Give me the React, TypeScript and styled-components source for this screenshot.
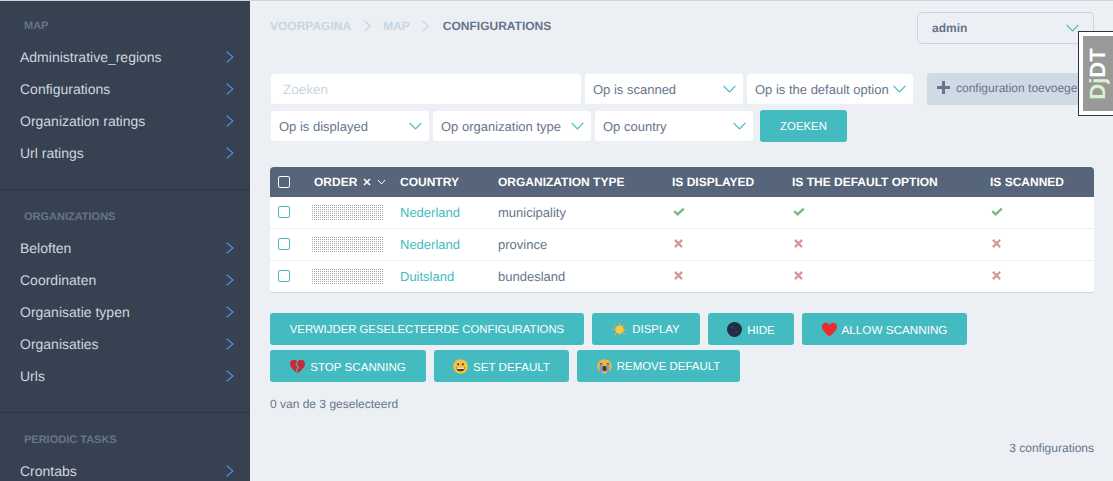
import React from "react";
import styled, { createGlobalStyle } from "styled-components";

const GlobalStyle = createGlobalStyle`
  html, body { margin: 0; padding: 0; background: #ecf0f5; }
  body { font-family: "Liberation Sans", Arial, sans-serif; text-rendering: geometricPrecision; }
  * { box-sizing: border-box; }
`;

const Page = styled.div`
  position: relative;
  display: flex;
  height: 481px;
  overflow: hidden;
  border-top: 1px solid #d2d2d2;
`;

const Sidebar = styled.nav`
  flex: 0 0 250px;
  background: #364152;
`;

const Group = styled.section`
  padding: 14px 0 20px;
  border-bottom: 1px solid #2d3746;
  & + & { padding-top: 16px; }
  &:last-child { border-bottom: 0; }
`;

const GroupTitle = styled.div`
  height: 20px;
  margin-bottom: 6px;
  padding: 1px 0 0 24px;
  font-size: 11px;
  font-weight: bold;
  line-height: 20px;
  text-transform: uppercase;
  color: #66758a;
`;

const MenuRow = styled.a`
  display: flex;
  align-items: center;
  justify-content: space-between;
  height: 32px;
  padding: 0 16px 0 20px;
  font-size: 14px;
  color: #d0d6de;
`;

const Main = styled.main`
  flex: 1;
  min-width: 0;
  padding: 11px 19px 0 20px;
`;

const TopBar = styled.header`
  display: flex;
  justify-content: space-between;
  height: 32px;
`;

const Crumbs = styled.div`
  display: flex;
  align-items: center;
  gap: 12.5px;
  height: 28px;
  font-size: 12px;
  font-weight: bold;
  text-transform: uppercase;
  color: #c6d6e4;
`;

const Current = styled.span`
  margin-left: 1px;
  color: #66758a;
`;

const UserSelect = styled.div`
  display: flex;
  align-items: center;
  justify-content: space-between;
  width: 177px;
  height: 32px;
  padding: 0 14px;
  border: 1px solid #c6d6e4;
  border-radius: 4px;
  font-size: 12px;
  font-weight: bold;
  color: #66758a;
`;

const Toolbar = styled.div`
  display: flex;
  justify-content: space-between;
  align-items: flex-start;
  margin-top: 29px;
`;

const Filters = styled.form`
  display: flex;
  flex-direction: column;
  gap: 6px;
  padding: 1px 0 0 1px;
`;

const FilterRow = styled.div`
  display: flex;
  align-items: center;
  gap: 4px;
`;

const SearchBox = styled.div`
  width: 310px;
  height: 30px;
  padding-left: 12px;
  border-radius: 3px;
  background: #fff;
  font-size: 13.5px;
  line-height: 31px;
  color: #c6d6e4;
`;

const Select = styled.div<{ $width: number }>`
  display: flex;
  align-items: center;
  justify-content: space-between;
  width: ${(p) => p.$width}px;
  height: 30px;
  padding: 0 7px 0 8px;
  border-radius: 3px;
  background: #fff;
  font-size: 13px;
  white-space: nowrap;
  color: #66758a;
`;

const SearchButton = styled.button`
  height: 32px;
  width: 87px;
  margin-left: 3px;
  padding: 0;
  border: 0;
  border-radius: 3px;
  background: #44bac1;
  font: 11.4px "Liberation Sans", Arial, sans-serif;
  color: #fff;
`;

const AddButton = styled.div`
  display: flex;
  align-items: center;
  gap: 6px;
  width: 167px;
  height: 32px;
  padding: 0 0 3px 10px;
  border-radius: 3px;
  background: #d0dae5;
  font-size: 12px;
  white-space: nowrap;
  color: #66758a;
`;

const Table = styled.table`
  width: 824px;
  margin-top: 25px;
  border-collapse: separate;
  border-spacing: 0;
  table-layout: fixed;
  background: #fff;
  border-radius: 4px 4px 2px 2px;
  box-shadow: 0 1px 0 #d0dae5;
`;

const HeadCell = styled.th`
  height: 30px;
  padding: 0 0 0 8px;
  background: #566579;
  font-size: 12px;
  font-weight: bold;
  text-align: left;
  text-transform: uppercase;
  white-space: nowrap;
  color: #fff;
  &:first-child { border-top-left-radius: 4px; }
  &:last-child { border-top-right-radius: 4px; }
`;

const Cell = styled.td`
  height: 32px;
  padding: 0 0 0 8px;
  border-bottom: 1px solid #ecf0f5;
  font-size: 13px;
  color: #66758a;
  tr:last-child > & { height: 31px; border-bottom: 0; }
`;

const Check = styled.span<{ $head?: boolean }>`
  display: block;
  width: 12px;
  height: 12px;
  margin-top: ${(p) => (p.$head ? 0 : -2)}px;
  border: 1.5px solid ${(p) => (p.$head ? "#fff" : "#44bac1")};
  border-radius: 2px;
`;

const OrderHead = styled.span`
  display: flex;
  align-items: center;
  gap: 6px;
`;

const DragHandle = styled.div`
  width: 72px;
  height: 15px;
  margin-left: -2px;
  background-image: radial-gradient(circle at 0.5px 0.5px, #a9a9a9 0.7px, transparent 0.8px);
  background-size: 2px 2px;
`;

const CountryLink = styled.a`
  color: #44bac1;
`;

const TickIcon = styled.svg`
  display: block;
  margin: -2px 0 0 1px;
`;

const CrossIcon = styled.svg`
  display: block;
  margin: -3px 0 0 2px;
`;

const Actions = styled.div`
  display: flex;
  flex-wrap: wrap;
  gap: 5px 8px;
  margin-top: 21px;
`;

const ActionButton = styled.button<{ $width: number; $size: number }>`
  display: flex;
  align-items: center;
  justify-content: center;
  gap: 5px;
  width: ${(p) => p.$width}px;
  height: 32px;
  padding: 0;
  border: 0;
  border-radius: 3px;
  background: #44bac1;
  font: ${(p) => p.$size}px "Liberation Sans", Arial, sans-serif;
  text-transform: uppercase;
  white-space: nowrap;
  color: #fff;
`;

const Selected = styled.p`
  margin: 14px 0 0;
  font-size: 12px;
  line-height: 16px;
  color: #66758a;
`;

const Total = styled.p`
  margin: 28px 0 0;
  font-size: 12px;
  line-height: 16px;
  text-align: right;
  color: #66758a;
`;

const DebugTab = styled.div`
  position: absolute;
  top: 30px;
  right: 0;
  width: 35px;
  height: 85px;
  padding: 4px 0 4px 4px;
  border: 1px solid #333;
  border-right: 0;
  background: #fff;
`;

const DebugInner = styled.div`
  display: flex;
  align-items: center;
  justify-content: center;
  width: 100%;
  height: 100%;
  background: #999;
`;

const DebugLabel = styled.span`
  transform: rotate(-90deg);
  font-size: 22px;
  font-weight: bold;
  color: #fff;
`;

const DebugAccent = styled.span`
  color: #d9f2cf;
`;

function Chevron() {
  return (
    <svg width="12" height="12" viewBox="0 0 12 12" fill="none" stroke="#4f8fe0" strokeWidth="1.2">
      <polyline points="4.7,0.7 11,6 4.7,11.3" />
    </svg>
  );
}

function CrumbChevron() {
  return (
    <svg width="7" height="12" viewBox="0 0 7 12" fill="none" stroke="#c6d6e4" strokeWidth="1.2">
      <polyline points="0.7,1 6.3,6 0.7,11" />
    </svg>
  );
}

function DownArrow() {
  return (
    <svg width="13" height="8" viewBox="0 0 13 8" fill="none" stroke="#44bac1" strokeWidth="1.2">
      <polyline points="0.6,0.8 6.5,7 12.4,0.8" />
    </svg>
  );
}

function Tick() {
  return (
    <TickIcon width="12" height="10" viewBox="0 0 13 10" fill="#78b97e">
      <path d="M0.5 5 L2.3 3.2 L5 5.8 L10.8 0.4 L12.6 2.2 L5 9.4 Z" />
    </TickIcon>
  );
}

function Cross() {
  return (
    <CrossIcon width="9" height="9" viewBox="0 0 10 10" fill="none" stroke="#d79a9c" strokeWidth="2.6">
      <path d="M1 1 L9 9 M9 1 L1 9" />
    </CrossIcon>
  );
}

function Flag({ kind }: { kind: "sun" | "moon" | "heart" | "broken" | "smile" | "cry" }) {
  if (kind === "sun") {
    return (
      <svg width="15" height="15" viewBox="0 0 14 14">
        <g stroke="#e8a93a" strokeWidth="1">
          <path d="M7 0 V2.4 M7 11.6 V14 M0 7 H2.4 M11.6 7 H14 M2 2 L3.7 3.7 M10.3 10.3 L12 12 M12 2 L10.3 3.7 M3.7 10.3 L2 12" />
        </g>
        <circle cx="7" cy="7" r="4" fill="#fcc93e" />
      </svg>
    );
  }
  if (kind === "moon") {
    return (
      <svg width="15" height="15" viewBox="0 0 14 14">
        <circle cx="7" cy="7" r="7" fill="#252c45" />
        <circle cx="5" cy="5" r="1.6" fill="#333b57" />
        <circle cx="9" cy="9.5" r="1.2" fill="#333b57" />
      </svg>
    );
  }
  if (kind === "heart" || kind === "broken") {
    return (
      <svg width="15" height="15" viewBox="0 0 14 14">
        <path d="M7 13.5 C3 10 0 7.8 0 4.4 C0 2 1.8 0.8 3.6 0.8 C5 0.8 6.3 1.6 7 3 C7.7 1.6 9 0.8 10.4 0.8 C12.2 0.8 14 2 14 4.4 C14 7.8 11 10 7 13.5 Z" fill={kind === "heart" ? "#ea2c30" : "#c92a38"} />
        {kind === "broken" && <path d="M7 2.5 L5.6 5.5 L8 7.5 L6 10 L7 13.5" fill="none" stroke="#44bac1" strokeWidth="1" />}
      </svg>
    );
  }
  return (
    <svg width="15" height="15" viewBox="0 0 14 14">
      <circle cx="7" cy="7" r="6.8" fill={kind === "smile" ? "#f5c33e" : "#f3b53c"} />
      {kind === "smile" ? (
        <>
          <circle cx="4.8" cy="5" r="1" fill="#5b3a12" />
          <circle cx="9.2" cy="5" r="1" fill="#5b3a12" />
          <path d="M3 7.6 H11 C11 10.2 9.2 11.5 7 11.5 C4.8 11.5 3 10.2 3 7.6 Z" fill="#5b3a12" />
          <rect x="3.6" y="7.8" width="6.8" height="1.4" fill="#fff" />
        </>
      ) : (
        <>
          <rect x="2.5" y="5" width="2.6" height="9" fill="#5aa6e6" />
          <rect x="8.9" y="5" width="2.6" height="9" fill="#5aa6e6" />
          <path d="M2.8 4.4 H5 M9 4.4 H11.2" stroke="#5b3a12" strokeWidth="1" />
          <ellipse cx="7" cy="8.8" rx="2" ry="2.6" fill="#5b3a12" />
        </>
      )}
    </svg>
  );
}

const menu = [
  { title: "Map", items: ["Administrative_regions", "Configurations", "Organization ratings", "Url ratings"] },
  { title: "Organizations", items: ["Beloften", "Coordinaten", "Organisatie typen", "Organisaties", "Urls"] },
  { title: "Periodic tasks", items: ["Crontabs"] },
];

const rows = [
  { country: "Nederland", type: "municipality", on: true },
  { country: "Nederland", type: "province", on: false },
  { country: "Duitsland", type: "bundesland", on: false },
];

const actions: { label: string; width: number; size: number; icon?: React.ComponentProps<typeof Flag>["kind"] }[] = [
  { label: "Verwijder geselecteerde configurations", width: 314, size: 11.35 },
  { label: "Display", width: 108, size: 11.4, icon: "sun" },
  { label: "Hide", width: 86, size: 11.6, icon: "moon" },
  { label: "Allow scanning", width: 165, size: 11.7, icon: "heart" },
  { label: "Stop scanning", width: 156, size: 11.6, icon: "broken" },
  { label: "Set default", width: 135, size: 11.6, icon: "smile" },
  { label: "Remove default", width: 163, size: 11.45, icon: "cry" },
];

export default function App() {
  return (
    <Page>
      <GlobalStyle />
      <Sidebar>
        {menu.map((group) => (
          <Group key={group.title}>
            <GroupTitle>{group.title}</GroupTitle>
            {group.items.map((item) => (
              <MenuRow key={item}>
                {item}
                <Chevron />
              </MenuRow>
            ))}
          </Group>
        ))}
      </Sidebar>
      <Main>
        <TopBar>
          <Crumbs>
            <span>Voorpagina</span>
            <CrumbChevron />
            <span>Map</span>
            <CrumbChevron />
            <Current>Configurations</Current>
          </Crumbs>
          <UserSelect>
            admin
            <DownArrow />
          </UserSelect>
        </TopBar>
        <Toolbar>
          <Filters>
            <FilterRow>
              <SearchBox>Zoeken</SearchBox>
              <Select $width={158}>Op is scanned<DownArrow /></Select>
              <Select $width={166}>Op is the default option<DownArrow /></Select>
            </FilterRow>
            <FilterRow>
              <Select $width={158}>Op is displayed<DownArrow /></Select>
              <Select $width={158}>Op organization type<DownArrow /></Select>
              <Select $width={158}>Op country<DownArrow /></Select>
              <SearchButton type="button">ZOEKEN</SearchButton>
            </FilterRow>
          </Filters>
          <AddButton>
            <svg width="13" height="13" viewBox="0 0 13 13" fill="#66758a">
              <path d="M5 0 H8 V5 H13 V8 H8 V13 H5 V8 H0 V5 H5 Z" />
            </svg>
            configuration toevoegen
          </AddButton>
        </Toolbar>
        <Table>
          <colgroup>
            <col width="36" />
            <col width="86" />
            <col width="98" />
            <col width="174" />
            <col width="120" />
            <col width="198" />
            <col width="112" />
          </colgroup>
          <thead>
            <tr>
              <HeadCell><Check $head /></HeadCell>
              <HeadCell>
                <OrderHead>
                  Order
                  <svg width="8" height="8" viewBox="0 0 8 8" fill="none" stroke="#fff" strokeWidth="1.6">
                    <path d="M1 1 L7 7 M7 1 L1 7" />
                  </svg>
                  <svg width="9" height="6" viewBox="0 0 9 6" fill="none" stroke="#fff" strokeWidth="1">
                    <polyline points="1,1 4.5,5 8,1" />
                  </svg>
                </OrderHead>
              </HeadCell>
              <HeadCell>Country</HeadCell>
              <HeadCell>Organization type</HeadCell>
              <HeadCell>Is displayed</HeadCell>
              <HeadCell>Is the default option</HeadCell>
              <HeadCell>Is scanned</HeadCell>
            </tr>
          </thead>
          <tbody>
            {rows.map((row) => (
              <tr key={row.type}>
                <Cell><Check /></Cell>
                <Cell><DragHandle /></Cell>
                <Cell><CountryLink>{row.country}</CountryLink></Cell>
                <Cell>{row.type}</Cell>
                <Cell>{row.on ? <Tick /> : <Cross />}</Cell>
                <Cell>{row.on ? <Tick /> : <Cross />}</Cell>
                <Cell>{row.on ? <Tick /> : <Cross />}</Cell>
              </tr>
            ))}
          </tbody>
        </Table>
        <Actions>
          {actions.map((action) => (
            <ActionButton key={action.label} type="button" $width={action.width} $size={action.size}>
              {action.icon && <Flag kind={action.icon} />}
              {action.label}
            </ActionButton>
          ))}
        </Actions>
        <Selected>0 van de 3 geselecteerd</Selected>
        <Total>3 configurations</Total>
      </Main>
      <DebugTab>
        <DebugInner>
          <DebugLabel><DebugAccent>Dj</DebugAccent>DT</DebugLabel>
        </DebugInner>
      </DebugTab>
    </Page>
  );
}
